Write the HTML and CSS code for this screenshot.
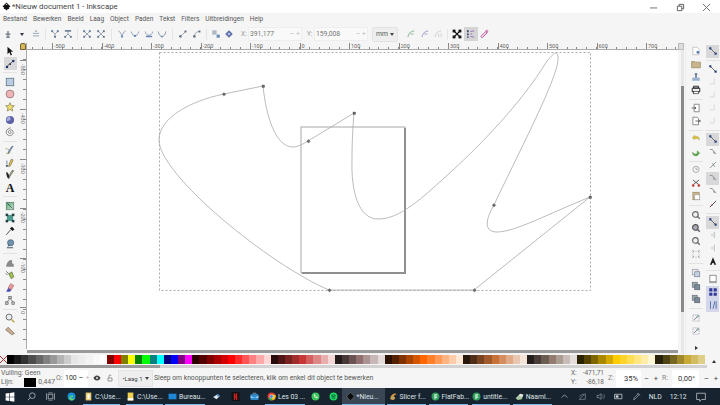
FILE: index.html
```html
<!DOCTYPE html>
<html lang="nl">
<head>
    <meta charset="UTF-8">
    <title>*Nieuw document 1 - Inkscape</title>
    <link rel="stylesheet" href="styles.css">
</head>
<body>
<svg class="defs" width="0" height="0">
    <symbol id="nodes-a" viewBox="0 0 16 16"><path d="M8 3v10M4 8h8" stroke="#3b4a5c" stroke-width="2" fill="none"/><path d="M5 13h6" stroke="#3b4a5c" stroke-width="2"/></symbol>
    <symbol id="nodes-b" viewBox="0 0 16 16"><path d="M3 7h10M3 11h10" stroke="#7f93a8" stroke-width="1.6"/><path d="M6 4l2-2 2 2z" fill="#3b4a5c"/></symbol>
    <symbol id="join-a" viewBox="0 0 16 16"><path d="M3 3l5 5 5-5M8 8v5" stroke="#6d8197" stroke-width="1.4" fill="none"/><rect x="2" y="2" width="3" height="3" fill="#2f4a6b"/><rect x="11" y="2" width="3" height="3" fill="#2f4a6b"/><rect x="6.5" y="11" width="3" height="3" fill="#2f4a6b"/></symbol>
    <symbol id="join-b" viewBox="0 0 16 16"><path d="M3 13l5-5 5 5M8 8V3" stroke="#6d8197" stroke-width="1.4" fill="none"/><path d="M3 3h10" stroke="#2f4a6b" stroke-width="2.4"/><rect x="2" y="11" width="3" height="3" fill="#2f4a6b"/><rect x="11" y="11" width="3" height="3" fill="#2f4a6b"/></symbol>
    <symbol id="cross-a" viewBox="0 0 16 16"><path d="M4 4l8 8M12 4l-8 8" stroke="#6d8197" stroke-width="1.4"/><g fill="#2f4a6b"><rect x="2" y="2" width="3" height="3"/><rect x="11" y="2" width="3" height="3"/><rect x="2" y="11" width="3" height="3"/><rect x="11" y="11" width="3" height="3"/></g></symbol>
    <symbol id="type-cusp" viewBox="0 0 16 16"><path d="M2 3c3 1 5 5 6 9 1-4 3-8 6-9" stroke="#5d7591" stroke-width="1.3" fill="none"/><rect x="6.5" y="10.5" width="3" height="3" fill="#2d5f9e"/></symbol>
    <symbol id="type-smooth" viewBox="0 0 16 16"><path d="M2 4c1 5 4 7 6 7s5-2 6-7" stroke="#5d7591" stroke-width="1.3" fill="none"/><circle cx="8" cy="11" r="1.8" fill="#2d5f9e"/></symbol>
    <symbol id="type-sym" viewBox="0 0 16 16"><path d="M2 4c1 5 4 6 6 6s5-1 6-6" stroke="#5d7591" stroke-width="1.3" fill="none"/><path d="M3 12h10" stroke="#2d5f9e" stroke-width="2.2"/></symbol>
    <symbol id="type-auto" viewBox="0 0 16 16"><path d="M2 4c1 6 4 8 6 8s5-2 6-8" stroke="#5d7591" stroke-width="1.6" fill="none"/><circle cx="8" cy="12" r="1.4" fill="#2d5f9e"/></symbol>
    <symbol id="seg-line" viewBox="0 0 16 16"><path d="M4 12l8-8" stroke="#6d8197" stroke-width="1.3"/><rect x="2" y="10" width="3.6" height="3.6" fill="#26394f"/><rect x="10.5" y="2.5" width="3" height="3" fill="#26394f"/></symbol>
    <symbol id="seg-curve" viewBox="0 0 16 16"><path d="M4 12c0-5 3-8 8-8" stroke="#6d8197" stroke-width="1.3" fill="none"/><rect x="2" y="10" width="3.6" height="3.6" fill="#26394f"/><rect x="10.5" y="2.5" width="3" height="3" fill="#26394f"/></symbol>
    <symbol id="obj-a" viewBox="0 0 16 16"><rect x="2" y="2" width="7" height="7" fill="#9aa6b3"/><rect x="9" y="9" width="5" height="5" fill="#3565a5"/></symbol>
    <symbol id="obj-b" viewBox="0 0 16 16"><path d="M8 2l6 6-6 6-6-6z" fill="#2b3f8f"/><circle cx="8" cy="8" r="2" fill="#9db4dd"/></symbol>
    <symbol id="curve-green" viewBox="0 0 16 16"><path d="M3 13c1-6 4-9 10-10" stroke="#5f9f6b" stroke-width="1.5" fill="none"/><path d="M7 8h5" stroke="#5f9f6b" stroke-width="1.4"/></symbol>
    <symbol id="curve-purple" viewBox="0 0 16 16"><path d="M3 13c1-6 4-9 10-10" stroke="#8b78c4" stroke-width="1.5" fill="none"/><path d="M7 8h5" stroke="#8b78c4" stroke-width="1.4"/></symbol>
    <symbol id="curve-grey" viewBox="0 0 16 16"><path d="M3 13c1-6 4-9 10-10M9 7v6M13 7v6" stroke="#c6c6c6" stroke-width="1.6" fill="none"/></symbol>
    <symbol id="handles" viewBox="0 0 16 16"><path d="M3 3l10 10M13 3L3 13" stroke="#111" stroke-width="2.2"/><g fill="#111"><rect x="1" y="1" width="4.5" height="4.5"/><rect x="10.5" y="1" width="4.5" height="4.5"/><rect x="1" y="10.5" width="4.5" height="4.5"/><rect x="10.5" y="10.5" width="4.5" height="4.5"/></g></symbol>
    <symbol id="show-bars" viewBox="0 0 16 16"><path d="M3 2v12" stroke="#25305c" stroke-width="2.4" stroke-dasharray="3 2"/><path d="M7 4l6-1M7 8h3M7 12l6 1" stroke="#85a" stroke-width="1.2"/></symbol>
    <symbol id="show-outline" viewBox="0 0 16 16"><path d="M3 12L11 4l2 2-8 8z" stroke="#b6308f" stroke-width="1.4" fill="none"/><circle cx="12.5" cy="3.5" r="1.6" fill="none" stroke="#b6308f"/></symbol>

    <symbol id="tool-select" viewBox="0 0 16 16"><path d="M4 1v12l3-3 2.2 5 2-1-2.2-5H13z" fill="#111"/></symbol>
    <symbol id="tool-node" viewBox="0 0 16 16"><path d="M3 13C5 8 8 9 13 3" stroke="#3b4660" stroke-width="1.3" fill="none"/><rect x="1.5" y="11" width="3.5" height="3.5" fill="#1d2f6b"/><rect x="11.5" y="1.5" width="3.5" height="3.5" fill="#1d2f6b"/><rect x="7" y="7" width="2.5" height="2.5" fill="#222"/></symbol>
    <symbol id="tool-rect" viewBox="0 0 16 16"><rect x="2" y="2" width="12" height="12" fill="#b9cee0" stroke="#5b6d80" stroke-width="1.2"/></symbol>
    <symbol id="tool-ellipse" viewBox="0 0 16 16"><circle cx="8" cy="8" r="6.3" fill="#f1b4b4" stroke="#7a6a6a" stroke-width="1.1"/></symbol>
    <symbol id="tool-star" viewBox="0 0 16 16"><path d="M8 1l2 4.6 5 .4-3.8 3.3 1.2 5.2L8 11.8l-4.4 2.7 1.200-5.2L1 6l5-.4z" fill="#f1dc6b" stroke="#77724c" stroke-width="1"/></symbol>
    <symbol id="tool-3d" viewBox="0 0 16 16"><circle cx="8" cy="8" r="6.5" fill="#5d62a8"/><path d="M8 2a6 6 0 0 0-5 8l6-2z" fill="#aab0da"/></symbol>
    <symbol id="tool-spiral" viewBox="0 0 16 16"><path d="M8 8c1-1 2 0 1.5 1.500S6 11 5.500 8.500 8 3.500 11 5s2.500 7-1 8.500S1.500 12 2 8 6 1.500 9 1.500" stroke="#666" stroke-width="1.2" fill="none"/></symbol>
    <symbol id="tool-pencil" viewBox="0 0 16 16"><path d="M13 2L7 11l-2 3 .5-3.500L11 2z" fill="#7fa0c8" stroke="#3f4f70" stroke-width=".8"/><path d="M1 6c3-2 3 3 5 1M2 13c2 1 5 0 7-2" stroke="#7c8f3d" stroke-width="1.2" fill="none"/></symbol>
    <symbol id="tool-pen" viewBox="0 0 16 16"><path d="M13 3L9 12l-3 2 .5-4L10 2z" fill="#e7cb55" stroke="#5a5433" stroke-width=".9"/><rect x="1.5" y="11" width="3" height="3" fill="#36506f"/><path d="M3 4v6" stroke="#36506f" stroke-width="1"/></symbol>
    <symbol id="tool-calli" viewBox="0 0 16 16"><path d="M14 1L8 10l-2 4 .5-5L11 1z" fill="#b9b28a" stroke="#333" stroke-width=".8"/><path d="M2 3c3 0 4 4 5 7l-2 4c-2-3-3-7-3-11z" fill="#20252c"/></symbol>
    <symbol id="tool-gradient" viewBox="0 0 16 16"><defs><linearGradient id="grad-green" x1="0" y1="0" x2="1" y2="1"><stop offset="0" stop-color="#4f9f69"/><stop offset="1" stop-color="#d5e8d8"/></linearGradient></defs><rect x="2" y="2" width="12" height="12" fill="url(#grad-green)" stroke="#55756b"/><path d="M4 4l8 8" stroke="#234" stroke-width="1"/></symbol>
    <symbol id="tool-mesh" viewBox="0 0 16 16"><rect x="3" y="3" width="10" height="10" fill="#4f9a8e"/><g fill="#25403f"><rect x="1" y="1" width="4" height="4"/><rect x="11" y="1" width="4" height="4"/><rect x="1" y="11" width="4" height="4"/><rect x="11" y="11" width="4" height="4"/></g></symbol>
    <symbol id="tool-dropper" viewBox="0 0 16 16"><path d="M2 14l7-8" stroke="#555" stroke-width="1.6"/><path d="M8 4l3-3 4 4-3 3z" fill="#111"/></symbol>
    <symbol id="tool-bucket" viewBox="0 0 16 16"><circle cx="9" cy="6" r="5" fill="#6f93ac" stroke="#44586a"/><path d="M3 14h10M5 12l1-3" stroke="#44586a" stroke-width="1.6"/></symbol>
    <symbol id="tool-tweak" viewBox="0 0 16 16"><path d="M2 14c0-5 3-10 7-11 3 0 3 3 2 5l3 2v4z" fill="#8a8a8a"/></symbol>
    <symbol id="tool-spray" viewBox="0 0 16 16"><path d="M6 6l5-3 3 8-4 3z" fill="#9dc24f" stroke="#33421c" stroke-width=".8"/><path d="M2 2l4 4M1 6l3 1" stroke="#333" stroke-width="1"/></symbol>
    <symbol id="tool-eraser" viewBox="0 0 16 16"><path d="M9 1l5 3-4 7-5-3z" fill="#ec9a9a" stroke="#844" stroke-width=".8"/><path d="M5 8l5 3-2 3H2z" fill="#4a4fb5"/></symbol>
    <symbol id="tool-connector" viewBox="0 0 16 16"><path d="M3 12l5-7 5 7" stroke="#666" stroke-width="1.3" fill="none"/><rect x="6" y="2" width="4" height="4" fill="#bbb" stroke="#444" stroke-width=".8"/><rect x="1" y="11" width="4" height="4" fill="#bbb" stroke="#444" stroke-width=".8"/><rect x="11" y="11" width="4" height="4" fill="#bbb" stroke="#444" stroke-width=".8"/></symbol>
    <symbol id="tool-zoom" viewBox="0 0 16 16"><circle cx="6.5" cy="6.5" r="4.8" fill="#e8eef3" stroke="#555" stroke-width="1.3"/><path d="M10 10l5 5" stroke="#b99c3c" stroke-width="2.2"/></symbol>
    <symbol id="tool-measure" viewBox="0 0 16 16"><path d="M1 6l4-4 10 10-4 2z" fill="#c9ae91" stroke="#6f5a48" stroke-width="1"/></symbol>

    <symbol id="cmd-new" viewBox="0 0 16 16"><path d="M3 2h7l3 3v9H3z" fill="#fff" stroke="#aaa"/><circle cx="11" cy="10" r="2.2" fill="#5277b0"/></symbol>
    <symbol id="cmd-open" viewBox="0 0 16 16"><path d="M1 4h5l1 1h8v9H1z" fill="#c9b58c" stroke="#8f7d59"/></symbol>
    <symbol id="cmd-save" viewBox="0 0 16 16"><path d="M2 14V9h12v5z" fill="#9ab0cd"/><path d="M8 2v7M6 3h4" stroke="#5b7095" stroke-width="2.4"/></symbol>
    <symbol id="cmd-print" viewBox="0 0 16 16"><path d="M4 2h8v3H4zM2 5h12v6H2z" fill="none" stroke="#222" stroke-width="1.5"/><rect x="4" y="10" width="8" height="4" fill="#fff" stroke="#222"/></symbol>
    <symbol id="cmd-import" viewBox="0 0 16 16"><path d="M5 2h8v12H5z" fill="#fff" stroke="#555"/><path d="M1 8h7M6 6l2 2-2 2" stroke="#444" stroke-width="1.2" fill="none"/></symbol>
    <symbol id="cmd-export" viewBox="0 0 16 16"><path d="M3 2h7l2 2v10H3z" fill="#fff" stroke="#555"/><path d="M7 8h8M13 6l2 2-2 2" stroke="#444" stroke-width="1.2" fill="none"/></symbol>
    <symbol id="cmd-undo" viewBox="0 0 16 16"><path d="M6 2L2 6l4 3V7h4c2 0 3 1 3 3 1-4-1-6-4-6H6z" fill="#e2c33e" stroke="#a18b2d" stroke-width=".6"/></symbol>
    <symbol id="cmd-redo" viewBox="0 0 16 16"><path d="M10 6l4 4-4 3v-2H6c-2 0-3-1-3-3-1 4 1 6 4 6h3z" fill="#5cb046" stroke="#3d7c2f" stroke-width=".6"/></symbol>
    <symbol id="cmd-clock" viewBox="0 0 16 16"><circle cx="8" cy="7" r="5" fill="#f2f2f2" stroke="#888"/><path d="M8 4v3h3" stroke="#888" fill="none"/></symbol>
    <symbol id="cmd-cut" viewBox="0 0 16 16"><path d="M3 3l10 8M13 3L3 11" stroke="#555" stroke-width="1.5"/><circle cx="3.5" cy="12" r="2" fill="#c33"/><circle cx="12.5" cy="12" r="2" fill="#c33"/></symbol>
    <symbol id="cmd-paste" viewBox="0 0 16 16"><rect x="3" y="2" width="10" height="12" fill="#cfba8e" stroke="#8f7d59"/><rect x="6" y="6" width="8" height="8" fill="#fff" stroke="#999"/></symbol>
    <symbol id="cmd-zoom" viewBox="0 0 16 16"><circle cx="7" cy="7" r="4.5" fill="#eef1f3" stroke="#666" stroke-width="1.8"/><path d="M10.5 10.5l3.5 3.5" stroke="#666" stroke-width="2"/></symbol>
    <symbol id="cmd-zoom-dark" viewBox="0 0 16 16"><circle cx="7" cy="7" r="4.5" fill="#aab" stroke="#555" stroke-width="1.8"/><path d="M10.5 10.5l3.5 3.5" stroke="#555" stroke-width="2"/></symbol>
    <symbol id="cmd-fit" viewBox="0 0 16 16"><path d="M3 3h10v10H3z" fill="none" stroke="#9aa" stroke-dasharray="2 2"/><path d="M2 2l3 3M14 2l-3 3M2 14l3-3M14 14l-3-3" stroke="#777"/></symbol>
    <symbol id="cmd-dup" viewBox="0 0 16 16"><rect x="2" y="2" width="9" height="9" fill="#eee" stroke="#8a8f99"/><rect x="6" y="6" width="8" height="8" fill="#c5d0e2" stroke="#6e7a90"/></symbol>
    <symbol id="cmd-clone" viewBox="0 0 16 16"><rect x="2" y="2" width="8" height="8" fill="#9aa" stroke="#667"/><rect x="6" y="6" width="8" height="8" fill="#7a8c99" stroke="#556"/></symbol>
    <symbol id="cmd-group" viewBox="0 0 16 16"><rect x="3" y="3" width="10" height="10" fill="none" stroke="#99a" stroke-dasharray="2 1"/><path d="M5 11l6-6" stroke="#778" stroke-width="1.4"/><circle cx="11" cy="5" r="2" fill="#9aa"/></symbol>

    <symbol id="snap-on" viewBox="0 0 16 16"><path d="M4 4l8 8" stroke="#555" stroke-width="1.4"/><rect x="2" y="2" width="3.4" height="3.4" fill="#1e3f73"/><rect x="10.5" y="10.5" width="3.4" height="3.4" fill="#1e3f73"/></symbol>
    <symbol id="snap-faint" viewBox="0 0 16 16"><path d="M10 2v9H3" stroke="#d4d4d4" stroke-width="1.3" fill="none"/></symbol>
    <symbol id="snap-bend" viewBox="0 0 16 16"><path d="M3 4h4l3 5 3 2" stroke="#7a8a82" stroke-width="1.3" fill="none"/><rect x="8.5" y="7.5" width="3" height="3" fill="#99a"/></symbol>
    <symbol id="snap-cross" viewBox="0 0 16 16"><path d="M3 13L13 3M7 5l4 6" stroke="#6f7f73" stroke-width="1.2"/></symbol>
    <symbol id="snap-pen" viewBox="0 0 16 16"><path d="M3 13L13 3" stroke="#444" stroke-width="1.5"/><rect x="5" y="9" width="2" height="2" fill="#a33"/></symbol>
    <symbol id="snap-mid" viewBox="0 0 16 16"><path d="M10 3v10M5 8h3" stroke="#a3b0a8" stroke-width="1.3"/></symbol>
    <symbol id="snap-text" viewBox="0 0 16 16"><path d="M8 2l5 12h-3l-1-3H7l-1 3H3z" fill="#222"/></symbol>
    <symbol id="snap-page" viewBox="0 0 16 16"><rect x="3" y="2" width="10" height="12" fill="#fff" stroke="#777" stroke-width="1.2"/><path d="M3 12h10" stroke="#777"/></symbol>
    <symbol id="snap-grid" viewBox="0 0 16 16"><path d="M2 2h5v5H2zM9 2h5v5H9zM2 9h5v5H2zM9 9h5v5H9z" fill="#2e3a96"/></symbol>
    <symbol id="snap-guide" viewBox="0 0 16 16"><path d="M4 2v12M8 14L11 2M13 2v12" stroke="#3a5fa0" stroke-width="1.3" fill="none"/></symbol>
</svg>

<div class="titlebar">
    <svg class="app-logo" viewBox="0 0 16 16"><path d="M8 1L15 8l-3 2 1 2-3 1-2 2-2-2-3-1 1-2-3-2z" fill="#111"/><path d="M6 5l2-2 2 2z" fill="#fff"/></svg>
    <span class="title-text">*Nieuw document 1 - Inkscape</span>
    <div class="window-btns">
        <svg viewBox="0 0 10 10"><path d="M0 5.5h8" stroke="#666"/></svg>
        <svg viewBox="0 0 10 10"><path d="M1.5 3.500h5v5h-5zM3.500 3.500v-2h5v5h-2" fill="none" stroke="#555"/></svg>
        <svg viewBox="0 0 10 10"><path d="M1 1l8 8M9 1l-8 8" stroke="#666"/></svg>
    </div>
</div>

<nav class="menubar">
    <span>Bestand</span><span>Bewerken</span><span>Beeld</span><span>Laag</span><span>Object</span><span>Paden</span><span>Tekst</span><span>Filters</span><span>Uitbreidingen</span><span>Help</span>
</nav>

<div class="toolbar">
    <svg class="ic"><use href="#nodes-a"/></svg>
    <span class="caret"></span>
    <svg class="ic"><use href="#nodes-b"/></svg>
    <i class="tsep"></i>
    <svg class="ic"><use href="#join-a"/></svg>
    <svg class="ic"><use href="#join-b"/></svg>
    <i class="tsep"></i>
    <svg class="ic"><use href="#cross-a"/></svg>
    <svg class="ic"><use href="#cross-a"/></svg>
    <i class="tsep tsep-w"></i>
    <svg class="ic"><use href="#type-cusp"/></svg>
    <svg class="ic"><use href="#type-smooth"/></svg>
    <svg class="ic"><use href="#type-sym"/></svg>
    <svg class="ic"><use href="#type-auto"/></svg>
    <i class="tsep tsep-w"></i>
    <svg class="ic"><use href="#seg-line"/></svg>
    <svg class="ic"><use href="#seg-curve"/></svg>
    <i class="tsep"></i>
    <svg class="ic"><use href="#obj-a"/></svg>
    <svg class="ic"><use href="#obj-b"/></svg>
    <div class="coord">
        <span class="coord-label">X:</span>
        <span class="coord-field">391,177<em>– +</em></span>
    </div>
    <div class="coord">
        <span class="coord-label">Y:</span>
        <span class="coord-field">159,008<em>– +</em></span>
    </div>
    <div class="unit-box">mm<span class="caret caret-dark"></span></div>
    <svg class="ic"><use href="#curve-green"/></svg>
    <svg class="ic"><use href="#curve-purple"/></svg>
    <svg class="ic"><use href="#curve-grey"/></svg>
    <i class="tsep"></i>
    <svg class="ic ic-solid"><use href="#handles"/></svg>
    <span class="ic-on"><svg class="ic ic-solid"><use href="#show-bars"/></svg></span>
    <svg class="ic ic-solid"><use href="#show-outline"/></svg>
</div>

<div class="workspace">
    <aside class="tools">
        <svg class="tool"><use href="#tool-select"/></svg>
        <span class="tool-on"><svg class="tool"><use href="#tool-node"/></svg></span>
        <i class="vsep"></i>
        <svg class="tool"><use href="#tool-rect"/></svg>
        <svg class="tool"><use href="#tool-ellipse"/></svg>
        <svg class="tool"><use href="#tool-star"/></svg>
        <svg class="tool"><use href="#tool-3d"/></svg>
        <svg class="tool"><use href="#tool-spiral"/></svg>
        <i class="vsep"></i>
        <svg class="tool"><use href="#tool-pencil"/></svg>
        <svg class="tool"><use href="#tool-pen"/></svg>
        <svg class="tool"><use href="#tool-calli"/></svg>
        <span class="tool-text">A</span>
        <i class="vsep"></i>
        <svg class="tool"><use href="#tool-gradient"/></svg>
        <svg class="tool"><use href="#tool-mesh"/></svg>
        <svg class="tool"><use href="#tool-dropper"/></svg>
        <svg class="tool"><use href="#tool-bucket"/></svg>
        <i class="vsep vsep-lg"></i>
        <svg class="tool"><use href="#tool-tweak"/></svg>
        <svg class="tool"><use href="#tool-spray"/></svg>
        <svg class="tool"><use href="#tool-eraser"/></svg>
        <svg class="tool"><use href="#tool-connector"/></svg>
        <i class="vsep"></i>
        <svg class="tool"><use href="#tool-zoom"/></svg>
        <svg class="tool"><use href="#tool-measure"/></svg>
    </aside>

    <div class="ruler-v">
        <div class="lock"></div>
        <div class="vticks">
            <span>-500</span><span>-400</span><span>-300</span><span>-200</span><span>-100</span><span>0</span>
        </div>
    </div>

    <div class="center">
        <div class="ruler-h">
            <span>-500</span><span>-400</span><span>-300</span><span>-200</span><span>-100</span><span>0</span><span>100</span><span>200</span><span>300</span><span>400</span><span>500</span><span>600</span><span>700</span>
        </div>
        <svg class="canvas" viewBox="27 50 651 299">
            <rect class="page-border" x="159.5" y="52.5" width="431" height="238"/>
            <path class="page-shadow" d="M405 128V273H302"/>
            <rect class="page-rect" x="301" y="127" width="104" height="146"/>
            <path class="outline" d="M263 86L224 94C190 101 159 118 159 140C159 175 270 265 329 290L474 290L590 197C550 213 515 232 497 232C485 232 484 222 494 205C515 160 557 80 558 60C558.5 48 553 54 547 61C520 105 480 145 453 170C420 200 400 219 378 219C358 219 351 190 352 160C352 140 353 125 354 113L308 141C300 146 296 147 293 147C275 147 266 115 263 86Z"/>
            <g class="nodes">
                <path d="M224 92.500l1.800 1.800-1.800 1.800-1.800-1.800z"/>
                <rect x="262" y="85" width="2.600" height="2.600"/>
                <rect x="353" y="112" width="2.600" height="2.600"/>
                <path d="M308.500 139.500l1.800 1.800-1.800 1.800-1.800-1.800z"/>
                <path d="M494 203.500l1.800 1.800-1.800 1.800-1.800-1.800z"/>
                <rect x="589" y="196" width="2.600" height="2.600"/>
                <path d="M474.500 288.500l1.800 1.800-1.800 1.800-1.800-1.800z"/>
                <path d="M329.500 288.500l1.800 1.800-1.800 1.800-1.800-1.800z"/>
            </g>
        </svg>
        <div class="hscroll"></div>
    </div>

    <div class="vscroll">
        <div class="corner"></div>
        <div class="vscroll-thumb"></div>
    </div>

    <aside class="commands">
        <svg class="tool"><use href="#cmd-new"/></svg>
        <svg class="tool"><use href="#cmd-open"/></svg>
        <svg class="tool"><use href="#cmd-save"/></svg>
        <svg class="tool"><use href="#cmd-print"/></svg>
        <i class="vsep"></i>
        <svg class="tool"><use href="#cmd-import"/></svg>
        <svg class="tool"><use href="#cmd-export"/></svg>
        <i class="vsep"></i>
        <svg class="tool"><use href="#cmd-undo"/></svg>
        <svg class="tool"><use href="#cmd-redo"/></svg>
        <i class="vsep"></i>
        <svg class="tool"><use href="#cmd-clock"/></svg>
        <svg class="tool"><use href="#cmd-cut"/></svg>
        <svg class="tool"><use href="#cmd-paste"/></svg>
        <i class="vsep vsep-lg"></i>
        <svg class="tool"><use href="#cmd-zoom"/></svg>
        <svg class="tool"><use href="#cmd-zoom-dark"/></svg>
        <svg class="tool"><use href="#cmd-zoom"/></svg>
        <svg class="tool"><use href="#cmd-fit"/></svg>
        <i class="vsep vsep-lg"></i>
        <svg class="tool"><use href="#cmd-dup"/></svg>
        <svg class="tool"><use href="#cmd-clone"/></svg>
        <svg class="tool"><use href="#cmd-clone"/></svg>
        <i class="vsep vsep-lg"></i>
        <svg class="tool"><use href="#cmd-group"/></svg>
        <svg class="tool"><use href="#cmd-group"/></svg>
        <span class="more-arrow"></span>
    </aside>

    <aside class="snaps">
        <span class="tool-on"><svg class="tool"><use href="#snap-on"/></svg></span>
        <i class="vsep"></i>
        <svg class="tool"><use href="#snap-on"/></svg>
        <svg class="tool"><use href="#snap-faint"/></svg>
        <svg class="tool"><use href="#snap-faint"/></svg>
        <svg class="tool"><use href="#snap-faint"/></svg>
        <svg class="tool"><use href="#snap-faint"/></svg>
        <i class="vsep"></i>
        <span class="tool-on"><svg class="tool"><use href="#snap-on"/></svg></span>
        <svg class="tool"><use href="#snap-bend"/></svg>
        <svg class="tool"><use href="#snap-cross"/></svg>
        <span class="tool-on"><svg class="tool"><use href="#snap-bend"/></svg></span>
        <svg class="tool"><use href="#snap-bend"/></svg>
        <svg class="tool"><use href="#snap-pen"/></svg>
        <i class="vsep"></i>
        <span class="tool-on"><svg class="tool"><use href="#snap-on"/></svg></span>
        <svg class="tool"><use href="#snap-mid"/></svg>
        <svg class="tool"><use href="#snap-mid"/></svg>
        <svg class="tool"><use href="#snap-text"/></svg>
        <i class="vsep"></i>
        <svg class="tool"><use href="#snap-page"/></svg>
        <span class="tool-on tool-blue"><svg class="tool"><use href="#snap-grid"/></svg></span>
        <span class="tool-on tool-blue"><svg class="tool"><use href="#snap-guide"/></svg></span>
    </aside>
</div>

<div class="palette-row">
    <div class="no-color"></div>
    <div class="swatches" id="swatches"></div>
    <div class="palette-more"><span class="more-up"></span></div>
</div>
<div class="palette-scroll"><div class="palette-thumb"></div></div>

<div class="statusbar">
    <div class="fillstroke">
        <div>Vulling: Geen</div>
        <div class="stroke-row">Lijn:<b class="stroke-swatch"></b>0,447</div>
    </div>
    <span class="opacity-label">O:</span>
    <div class="opacity-field"><span>100</span><em>–</em><em class="faint">+</em></div>
    <svg class="status-ic" viewBox="0 0 16 16"><path d="M8 3c4 0 6 3 7 5-1 2-3 5-7 5s-6-3-7-5c1-2 3-5 7-5z" fill="#444"/><circle cx="8" cy="8" r="2" fill="#eee"/></svg>
    <svg class="status-ic" viewBox="0 0 16 16"><path d="M4 8h8v6H4zM6 8V4c0-3 4-3 4 0" fill="none" stroke="#777" stroke-width="1.4"/></svg>
    <div class="layer-btn"><span>•Laag 1</span><span class="caret caret-dark"></span></div>
    <span class="message">Sleep om knooppunten te selecteren, klik om enkel dit object te bewerken</span>
    <div class="cursor-pos">
        <div><span>X:</span><span>-471,71</span></div>
        <div><span>Y:</span><span>-86,18</span></div>
    </div>
    <span class="zoom-label">Z:</span>
    <div class="zoom-field">35%</div>
    <span class="step-btns">– +</span>
    <span class="rot-label">R:</span>
    <div class="rot-field">0,00°</div>
    <span class="step-btns step-last">– +</span>
</div>

<footer class="taskbar">
    <svg class="tb-start" viewBox="0 0 16 16"><path d="M1 2.500l6-1V7.500H1zM8 1.400L15 .5v7H8zM1 8.500h6v6l-6-1zM8 8.500h7v7l-7-1z" fill="#fff"/></svg>
    <svg class="tb-ic tb-search" viewBox="0 0 16 16"><circle cx="9.5" cy="6.5" r="5" fill="none" stroke="#c8ccd2" stroke-width="1.3"/><path d="M6 10l-4.500 4.500" stroke="#c8ccd2" stroke-width="1.3"/></svg>
    <svg class="tb-ic tb-view" viewBox="0 0 16 16"><path d="M4 4h8v8H4zM1 2v12M15 2v12" fill="none" stroke="#c8ccd2" stroke-width="1.2"/><path d="M4 1.500h8M4 14.500h8" stroke="#c8ccd2"/></svg>
    <svg class="tb-ic tb-edge" viewBox="0 0 16 16"><circle cx="8" cy="8" r="7" fill="#1493d8"/><path d="M4 11c0-4 4-6 7-4 1 1 1 2-1 2H7c0 3 4 4 7 2-1 3-4 4-6 4-3 0-4-2-4-4z" fill="#5fd06f"/></svg>

    <div class="tb-app tb-folder">
        <svg viewBox="0 0 16 16"><path d="M3 1h10v14H3z" fill="#e8c870"/><path d="M6 4h4v8H6z" fill="#fff"/></svg><span>C:\Use...</span>
    </div>
    <div class="tb-app tb-folder2">
        <svg viewBox="0 0 16 16"><path d="M3 1h10v14H3z" fill="#f0d050"/><path d="M3 11h10v4H3z" fill="#fff"/></svg><span>C:\Use...</span>
    </div>
    <div class="tb-app tb-bureau">
        <svg viewBox="0 0 16 16"><path d="M1 3h14v10H1z" fill="#1e88d8"/></svg><span>Bureau...</span>
    </div>

    <svg class="tb-ic tb-steam" viewBox="0 0 16 16"><path d="M2 9l8-5 4 3-6 6z" fill="#dfe6ee"/><circle cx="11" cy="6" r="2" fill="#2a82c4"/></svg>
    <svg class="tb-ic tb-netflix" viewBox="0 0 16 16"><rect x="1" width="14" height="16" fill="#111"/><path d="M5 2h2l2 7V2h2v12H9L7 7v7H5z" fill="#d81f26"/></svg>
    <svg class="tb-ic tb-mail" viewBox="0 0 16 16"><path d="M1 4h14v10H1z" fill="#2f8fd6"/><path d="M1 7l7 3 7-3v3H1z" fill="#bfe0f6"/><path d="M5 4l1-2h4l1 2" fill="none" stroke="#bfe0f6"/></svg>

    <div class="tb-app tb-chrome">
        <svg viewBox="0 0 16 16"><circle cx="8" cy="8" r="7" fill="#e33b2e"/><path d="M8 8L2 12a7 7 0 0 0 8 2.800z" fill="#2fa64a"/><path d="M8 8l2 6.800A7 7 0 0 0 14.800 5H8z" fill="#f5c518"/><circle cx="8" cy="8" r="3" fill="#3a7ee4" stroke="#fff"/></svg><span>Les 03 ...</span>
    </div>

    <svg class="tb-ic tb-whatsapp" viewBox="0 0 16 16"><circle cx="8" cy="8" r="7" fill="#3ac45b"/><path d="M5 5c0 3 3 6 6 6l1-2-2-1-1 1c-1-.500-2-1.500-2-2l1-1-1-2z" fill="#fff"/></svg>
    <svg class="tb-ic tb-spotify" viewBox="0 0 16 16"><circle cx="8" cy="8" r="7" fill="#1ed760"/><path d="M4 6c3-1 6-1 8 .500M4.500 8.500c2.500-.700 5-.500 7 .700M5 11c2-.500 4-.300 5.500.500" stroke="#123" stroke-width="1.2" fill="none"/></svg>

    <div class="tb-app tb-active">
        <svg viewBox="0 0 16 16"><path d="M8 1L15 8l-3 2 1 2-3 1-2 2-2-2-3-1 1-2-3-2z" fill="#0c0c0c" stroke="#bbb" stroke-width=".5"/></svg><span>*Nieu...</span>
    </div>
    <div class="tb-app tb-slicer">
        <svg viewBox="0 0 16 16"><path d="M2 12C3 4 11 1 14 4c-3 0-5 2-6 4 3 0 4 3 2 5-3 2-7 1-8-1z" fill="#d69a3e"/><path d="M3 12c2-3 6-3 7-1" fill="#8aa9c8"/></svg><span>Slicer f...</span>
    </div>
    <div class="tb-app tb-flat">
        <svg viewBox="0 0 16 16"><circle cx="8" cy="8" r="7" fill="#2ea05a"/><path d="M6 4h5v2H8v2h3v2H8v3H6z" fill="#dff3e4"/></svg><span>FlatFab...</span>
    </div>
    <div class="tb-app tb-untitled">
        <svg viewBox="0 0 16 16"><circle cx="8" cy="8" r="7" fill="#2ea05a"/><path d="M6 4h5v2H8v2h3v2H8v3H6z" fill="#dff3e4"/></svg><span>untitle...</span>
    </div>
    <div class="tb-app tb-naam">
        <svg viewBox="0 0 16 16"><path d="M1 11l8-8 6 2-3 8-7 1z" fill="#a8c8a0"/><path d="M9 3l6 2-3 4-5-3z" fill="#e5e5e5"/></svg><span>Naaml...</span>
    </div>

    <div class="tray">
        <svg viewBox="0 0 16 16"><path d="M3 10l5-5 5 5" fill="none" stroke="#c8ccd2" stroke-width="1.2"/></svg>
        <svg viewBox="0 0 16 16"><path d="M2 13L13 3v10zM2 8c3-3 7-4 9-4" fill="none" stroke="#9aa2ad" stroke-width="1"/></svg>
        <svg viewBox="0 0 16 16"><path d="M2 6h3l4-3v10l-4-3H2z" fill="none" stroke="#b5bac2"/><path d="M11 5c2 2 2 4 0 6M13 3c3 3 3 7 0 10" fill="none" stroke="#7d848e"/></svg>
        <svg viewBox="0 0 16 16"><path d="M1 4h13v8H1z" fill="none" stroke="#d5d8dc" stroke-width="1.3"/><rect x="3" y="6" width="5" height="4" fill="#d5d8dc"/></svg>
        <svg viewBox="0 0 16 16"><path d="M3 14l1-4 7-7 2 2-7 7zM10 2l4 4" fill="none" stroke="#b5bac2" stroke-width="1.1"/></svg>
        <span class="tray-lang">NLD</span>
        <span class="tray-clock">12:12</span>
        <svg class="tray-note" viewBox="0 0 16 16"><path d="M1 2h14v10H9l-3 3v-3H1z" fill="none" stroke="#d5d8dc" stroke-width="1.1"/></svg>
    </div>
</footer>

<script src="palette.js"></script>
</body>
</html>
```

FILE: styles.css
```css
* {
    margin: 0;
    padding: 0;
    box-sizing: border-box;
}
body {
    width: 720px;
    height: 405px;
    overflow: hidden;
    display: flex;
    flex-direction: column;
    font-family: Roboto, "Noto Sans", sans-serif;
    font-size: 7px;
    color: #444;
    background: #f5f5f5;
}
em {
    font-style: normal;
}
.defs {
    position: absolute;
}

/* title + menu */
.titlebar {
    height: 13px;
    background: #fff;
    display: flex;
    align-items: center;
    padding-left: 2px;
}
.app-logo {
    width: 9px;
    height: 9px;
}
.title-text {
    font-size: 7.8px;
    margin-left: 1px;
    color: #444;
}
.window-btns {
    margin-left: auto;
    display: flex;
    gap: 17px;
    padding-right: 9px;
    padding-top: 3px;
}
.window-btns svg {
    width: 9px;
    height: 9px;
}
.menubar {
    height: 13px;
    display: flex;
    align-items: center;
    gap: 6px;
    padding-left: 3px;
    font-size: 6.55px;
    color: #555;
    background: #f5f5f5;
}

/* tool controls bar */
.toolbar {
    height: 17px;
    display: flex;
    align-items: center;
    padding-left: 1px;
    background: #f5f5f5;
}
.ic {
    width: 10px;
    height: 10px;
    margin: 0 1.8px;
    flex: none;
    opacity: .75;
}
.ic-solid {
    opacity: 1;
}
.ic-on {
    display: flex;
    align-items: center;
    height: 14px;
    background: #d5d5d5;
}
.tsep {
    width: 1px;
    height: 11px;
    margin: 0 2.2px;
    background: #e4e4e4;
}
.tsep-w {
    margin: 0 3px;
}
.caret {
    display: inline-block;
    width: 0;
    height: 0;
    margin: 0 5.5px 0 5px;
    border: 2px solid transparent;
    border-top: 3px solid #334;
    border-bottom: 0;
}
.caret-dark {
    margin: 0 0 0 2px;
    border-top-color: #444;
}
.coord {
    display: flex;
    align-items: center;
    height: 14px;
}
.coord-label {
    font-size: 6.5px;
    width: 7px;
    margin-left: 5px;
    color: #999;
}
.coord-field {
    width: 54px;
    height: 14px;
    display: flex;
    justify-content: space-between;
    align-items: center;
    font-size: 6.8px;
    background: #f9f9f9;
    border: 1px solid #eee;
    color: #777;
    padding: 0 1px;
}
.coord-field em {
    color: #bbb;
}
.unit-box {
    display: flex;
    align-items: center;
    justify-content: center;
    width: 26px;
    height: 15px;
    margin: 0 6.4px 0 4px;
    font-size: 6.8px;
    color: #555;
    background: #eee;
    border: 1px solid #e2e2e2;
    border-radius: 2px;
}

/* middle section */
.workspace {
    height: 312px;
    display: flex;
}
.tools {
    width: 20px;
    flex: none;
    display: flex;
    flex-direction: column;
    align-items: center;
    padding-top: 2px;
}
.tool {
    display: block;
    width: 10px;
    height: 10px;
    margin: 1.3px 0;
    flex: none;
}
.commands .tool, .snaps .tool {
    margin: 1.5px 0;
}
.tool-on {
    display: flex;
    align-items: center;
    justify-content: center;
    width: 13px;
    background: #d8d8da;
    flex: none;
}
.tool-blue {
    background: #d4d6ea;
}
.tool-text {
    font-family: "Liberation Serif", serif;
    font-weight: bold;
    font-size: 12px;
    line-height: 12.6px;
    color: #111;
}
.vsep {
    display: block;
    width: 14px;
    height: 1px;
    margin: 2.2px 0;
    background: #e2e2e2;
    flex: none;
}
.vsep-lg {
    margin: 2.7px 0;
}
.commands .vsep, .snaps .vsep {
    margin: 2px 0;
}
.commands .vsep-lg {
    margin: 2.5px 0;
}
.ruler-v {
    width: 7px;
    flex: none;
    background: #f5f5f5;
    border-right: 1px solid #aaa;
    height: 306px;
}
.lock {
    height: 7px;
    background: #d9b756;
    border: 1px solid #6f6233;
    border-radius: 2px 2px 0 0;
    width: 6px;
}
.vticks {
    height: 299px;
    padding-top: 10px;
    background: repeating-linear-gradient(to bottom, transparent 0, transparent 9px, #888 9px, #888 10px) right/3px 100% no-repeat;
}
.vticks span {
    display: block;
    height: 49.5px;
    writing-mode: vertical-rl;
    font-size: 5.5px;
    color: #777;
    line-height: 6px;
    white-space: nowrap;
    border-top: 1px solid #888;
    padding-top: 3px;
}
.center {
    width: 651px;
    flex: none;
    display: flex;
    flex-direction: column;
}
.ruler-h {
    height: 7px;
    padding-left: 25px;
    display: flex;
    background:
        repeating-linear-gradient(to right, #888 0, #888 1px, transparent 1px, transparent 9.9px) 5px bottom/100% 2px no-repeat,
        #f5f5f5;
    border-bottom: 1px solid #aaa;
}
.ruler-h span {
    width: 49.5px;
    flex: none;
    font-size: 5.5px;
    line-height: 6px;
    color: #666;
    padding-left: 1px;
    border-left: 1px solid #888;
}
.ruler-h span:last-child {
    width: 32px;
}
.canvas {
    display: block;
    width: 651px;
    height: 299px;
    background: #fff;
}
.page-border {
    fill: none;
    stroke: #aaa;
    stroke-width: 1;
    stroke-dasharray: 2 2;
}
.page-rect {
    fill: none;
    stroke: #a8a8a8;
    stroke-width: 1;
}
.page-shadow {
    fill: none;
    stroke: #777;
    stroke-width: 2;
}
.outline {
    fill: none;
    stroke: #aaa;
    stroke-width: .8;
}
.nodes {
    fill: #6a6a6a;
    stroke: #444;
    stroke-width: .3;
}
.hscroll {
    flex: 1;
    background: linear-gradient(to bottom, #fff 0, #fff 1px, #999 1px, #999 4px, #f0f0f0 4px);
}
.vscroll {
    width: 7px;
    flex: none;
    display: flex;
    flex-direction: column;
    background: linear-gradient(to right, #f5f5f5 3px, #e8e8e8 3px, #e8e8e8 6px, #f5f5f5 6px);
}
.corner {
    width: 6px;
    height: 7px;
    background: #ddd;
    border: 1px solid #bbb;
}
.vscroll-thumb {
    width: 3px;
    height: 226px;
    margin: 36px 0 0 3px;
    background: #8a8a8a;
}
.commands {
    width: 20px;
    flex: none;
    display: flex;
    flex-direction: column;
    align-items: center;
    padding-top: 2px;
    border-left: 1px solid #eee;
    position: relative;
}
.more-arrow {
    position: absolute;
    bottom: 4px;
    left: 9px;
    border: 2.5px solid transparent;
    border-left: 3px solid #333;
    border-right: 0;
}
.snaps {
    width: 15px;
    flex: none;
    display: flex;
    flex-direction: column;
    align-items: center;
    padding-top: 2px;
}

/* colour palette */
.palette-row {
    height: 9px;
    margin-top: 1px;
    display: flex;
}
.no-color {
    width: 7px;
    height: 9px;
    flex: none;
    background:
        linear-gradient(45deg, transparent 44%, #a33 44%, #a33 56%, transparent 56%),
        linear-gradient(-45deg, transparent 44%, #a33 44%, #a33 56%, transparent 56%),
        #eee;
}
.swatches {
    display: flex;
    width: 700px;
    flex: none;
}
.swatches i {
    display: block;
    width: 7.13px;
    flex: none;
    height: 9px;
}
.palette-more {
    flex: 1;
    display: flex;
    align-items: flex-end;
    justify-content: center;
}
.more-up {
    display: block;
    margin-bottom: 1px;
    border: 2px solid transparent;
    border-bottom: 3px solid #333;
    border-top: 0;
}
.palette-scroll {
    height: 3px;
    background: #d2d2d2;
    margin-right: 13px;
    margin-top: 1px;
}
.palette-thumb {
    width: 160px;
    height: 3px;
    background: #9a9a9a;
}

/* status bar */
.statusbar {
    height: 20px;
    display: flex;
    align-items: center;
    background: #f5f5f5;
    font-size: 7px;
    color: #555;
}
.fillstroke {
    width: 56px;
    flex: none;
    padding-left: 1px;
    line-height: 9px;
    font-size: 6.8px;
    color: #666;
}
.stroke-row {
    display: flex;
    align-items: center;
}
.stroke-swatch {
    display: block;
    width: 12px;
    height: 9px;
    margin: 0 2px 0 11px;
    background: #000;
}
.opacity-label {
    width: 8px;
    color: #777;
}
.opacity-field {
    width: 24px;
    height: 17px;
    display: flex;
    align-items: center;
    gap: 2px;
    background: #fff;
    padding-left: 1px;
    color: #333;
}
.opacity-field .faint {
    color: #bbb;
}
.status-ic {
    width: 8px;
    height: 8px;
    margin-left: 5px;
}
.layer-btn {
    width: 35px;
    height: 17px;
    margin-left: 4px;
    display: flex;
    align-items: center;
    justify-content: center;
    background: #eee;
    border: 1px solid #e4e4e4;
    font-size: 6px;
    color: #444;
}
.message {
    margin-left: 1px;
    width: 417px;
    flex: none;
    white-space: nowrap;
    font-size: 6.75px;
    color: #555;
}
.cursor-pos {
    width: 33px;
    flex: none;
    line-height: 9px;
    font-size: 6.5px;
    color: #666;
}
.cursor-pos div {
    display: flex;
    justify-content: space-between;
}
.zoom-label, .rot-label {
    color: #888;
    width: 8px;
    flex: none;
    margin-left: 4px;
}
.zoom-field, .rot-field {
    height: 17px;
    line-height: 17px;
    width: 25px;
    flex: none;
    background: #fff;
    text-align: right;
    padding-right: 3px;
    font-size: 7.5px;
    color: #333;
}
.rot-label {
    margin-left: 4px;
    width: 10px;
}
.rot-field {
    width: 27px;
    padding-right: 4px;
}
.step-btns {
    margin-left: 3px;
    white-space: nowrap;
    font-size: 7.5px;
    word-spacing: 3px;
    color: #444;
    flex: none;
}
.step-last {
    margin-left: 5px;
}

/* windows taskbar */
.taskbar {
    flex: 1;
    display: flex;
    align-items: center;
    background: #17232f;
    color: #dfe3e8;
    font-size: 6.8px;
    padding-left: 5px;
}
.tb-start {
    width: 10px;
    height: 10px;
    flex: none;
}
.tb-ic {
    width: 9px;
    height: 9px;
    flex: none;
}
.tb-search {
    margin-left: 11.5px;
}
.tb-view {
    margin-left: 10px;
}
.tb-edge {
    margin-left: 12px;
}
.tb-app {
    height: 17px;
    display: flex;
    align-items: center;
    flex: none;
    gap: 2px;
    white-space: nowrap;
    box-shadow: inset 0 -1px 0 #76b9ed;
}
.tb-app svg {
    width: 9px;
    height: 9px;
    flex: none;
}
.tb-folder {
    margin-left: 7.5px;
    width: 37px;
    padding-left: 1px;
}
.tb-folder2 {
    margin-left: 6px;
    width: 37px;
}
.tb-bureau {
    margin-left: 2px;
    width: 40px;
    padding-left: 3px;
}
.tb-steam {
    margin-left: 7px;
}
.tb-netflix {
    margin-left: 9.5px;
}
.tb-mail {
    margin-left: 10px;
}
.tb-chrome {
    margin-left: 6.5px;
    width: 40px;
    padding-left: 2px;
}
.tb-whatsapp {
    margin-left: 5.5px;
}
.tb-spotify {
    margin-left: 9px;
}
.tb-active {
    margin-left: 4.5px;
    width: 43px;
    padding-left: 3.5px;
    background: #3a4654;
}
.tb-slicer {
    margin-left: 2px;
    width: 39px;
    padding-left: 1.5px;
}
.tb-flat {
    margin-left: 3px;
    width: 39px;
    padding-left: 1.5px;
}
.tb-untitled {
    margin-left: 3.7px;
    width: 38px;
    padding-left: .5px;
}
.tb-naam {
    margin-left: 3px;
    width: 39px;
    padding-left: 2px;
}
.tray {
    display: flex;
    align-items: center;
    margin-left: 8px;
    gap: 9px;
    flex: none;
}
.tray svg {
    width: 9px;
    height: 9px;
    flex: none;
}
.tray-lang {
    margin-left: -1px;
}
.tray-clock {
    margin-left: -1px;
}
.tray svg.tray-note {
    width: 10px;
    height: 10px;
}
```

FILE: palette.js
```js
// Inkscape default palette, left to right
var colors = [
    "#000000", "#1a1a1a", "#333333", "#4d4d4d", "#666666", "#808080", "#999999", "#b3b3b3", "#cccccc", "#e6e6e6", "#ececec", "#f2f2f2", "#f9f9f9", "#ffffff",
    "#800000", "#ff0000", "#808000", "#ffff00", "#008000", "#00ff00", "#008080", "#00ffff", "#000080", "#0000ff", "#800080", "#ff00ff",
    "#2b0000", "#550000", "#800000", "#aa0000", "#d40000", "#ff0000", "#ff2a2a", "#ff5555", "#ff8080", "#ffaaaa", "#ffd5d5",
    "#280b0b", "#501616", "#782121", "#a02c2c", "#c83737", "#d35f5f", "#de8787", "#e9afaf", "#f4d7d7",
    "#241c1c", "#483737", "#6c5353", "#916f6f", "#ac9393", "#c8b7b7", "#e3dbdb",
    "#2b1100", "#552200", "#803300", "#aa4400", "#d45500", "#ff6600", "#ff7f2a", "#ff9955", "#ffb380", "#ffccaa", "#ffe6d5",
    "#28170b", "#502d16", "#784421", "#a05a2c", "#c87137", "#d38d5f", "#deaa87", "#e9c6af", "#f4e3d7",
    "#241f1c", "#483e37", "#6c5d53", "#917c6f", "#ac9d93", "#c8beb7", "#e3dedb",
    "#2b2200", "#554400", "#806600", "#aa8800", "#d4aa00", "#ffcc00", "#ffd42a", "#ffdd55", "#ffe680", "#ffeeaa", "#fff6d5",
    "#28220b", "#504416", "#786721", "#a0892c", "#c8ab37", "#d3bc5f", "#dece87"
];
var row = document.getElementById("swatches");
colors.forEach(function (c) {
    var s = document.createElement("i");
    s.style.background = c;
    row.appendChild(s);
});
```
